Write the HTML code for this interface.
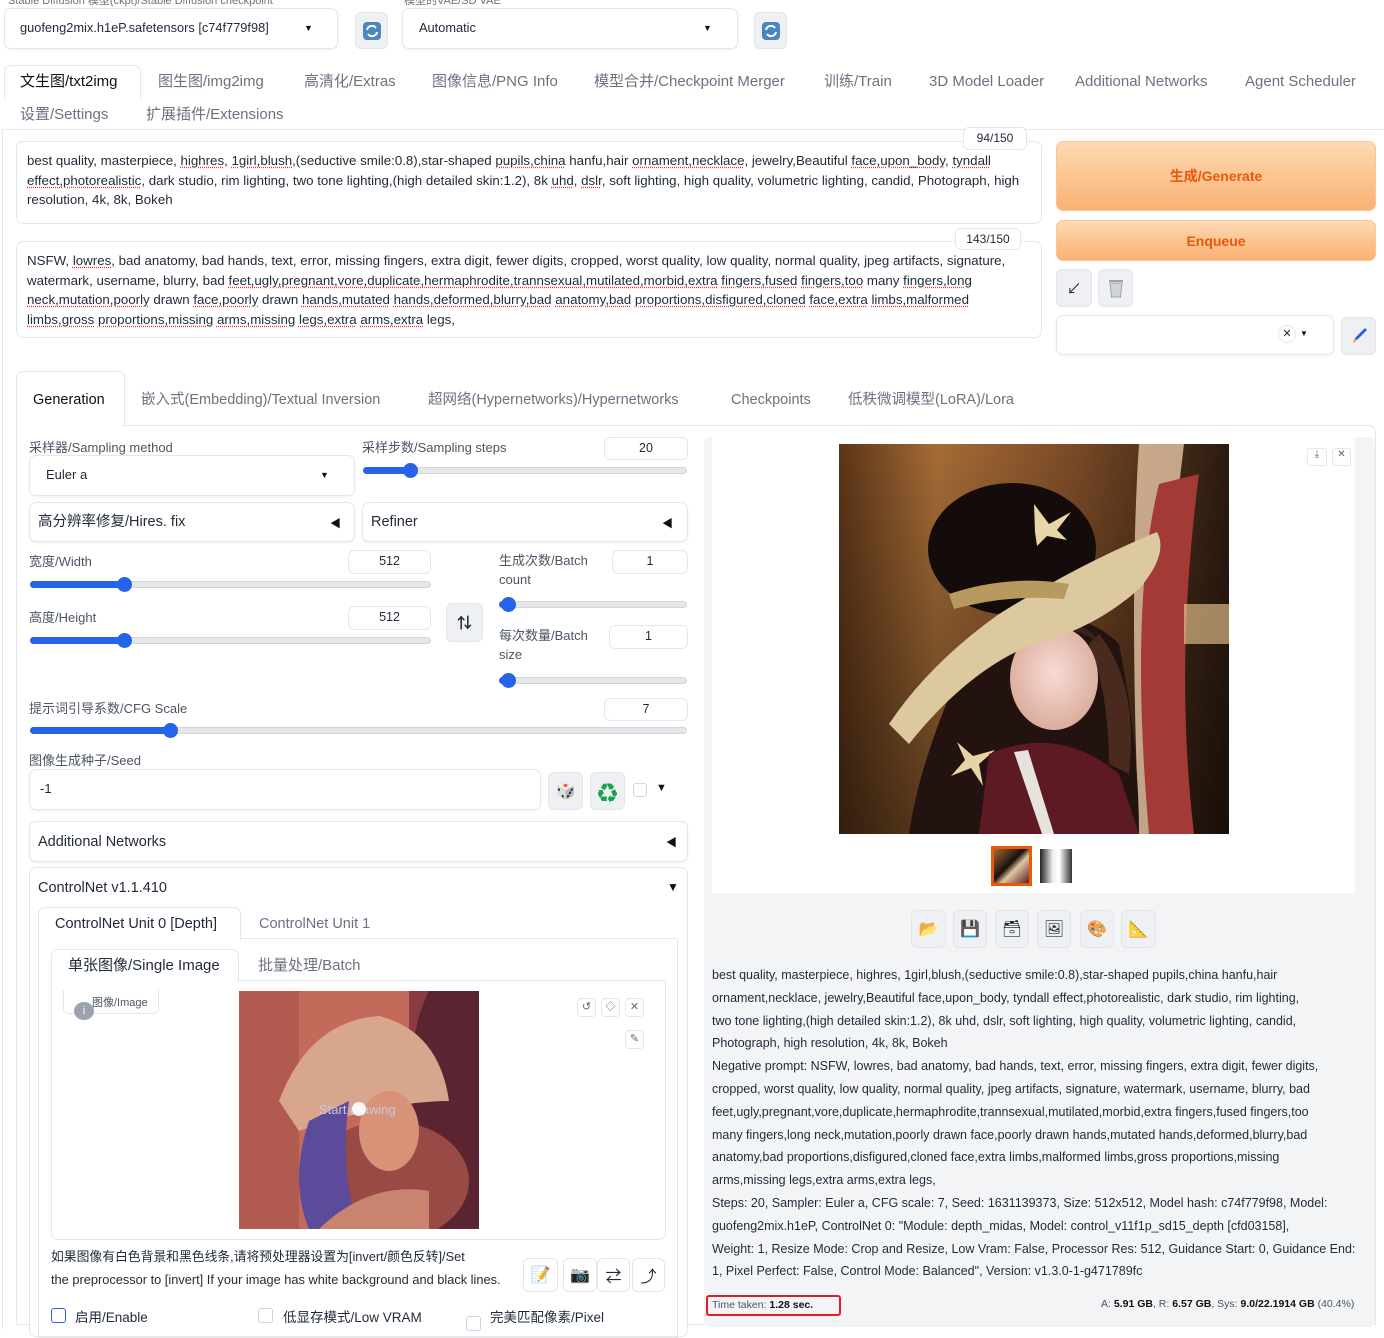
<!DOCTYPE html>
<html><head><meta charset="utf-8"><style>
*{box-sizing:border-box;margin:0;padding:0}
body{width:1384px;height:1322px;overflow:hidden;background:#fff;font-family:"Liberation Sans","Noto Sans CJK SC",sans-serif;color:#1f2937;position:relative;font-size:13px}
.a{position:absolute}
.box{position:absolute;border:1px solid #e5e7eb;border-radius:7px;background:#fff}
.sh{box-shadow:0 1px 2px rgba(0,0,0,.06)}
.btn{position:absolute;background:#eef0f3;border:1px solid #e3e5e8;border-radius:6px;display:flex;align-items:center;justify-content:center;font-size:16px}
.tab{position:absolute;color:#6b7280;font-size:15px;white-space:nowrap;line-height:20px;height:20px}
.lbl{position:absolute;color:#4b5563;font-size:13px;white-space:nowrap}
.num{position:absolute;border:1px solid #e5e7eb;border-radius:6px;background:#fff;text-align:center;font-size:12.5px;line-height:21px}
.sl{position:absolute;height:7px;border-radius:4px;background:#e5e7eb;border:1px solid #d1d5db}
.sl i{position:absolute;left:-1px;top:-1px;height:7px;background:#2563eb;border-radius:4px}
.sl b{position:absolute;top:-5px;width:15px;height:15px;border-radius:50%;background:#2563eb}
.ln{white-space:nowrap;height:19.5px}
.u{text-decoration:underline dotted #e33;text-underline-offset:2px}
.tri{position:absolute;font-size:11px;color:#111}
</style></head><body>
<div class="a" style="left:8px;top:-8px;font-size:11px;color:#6b7280">Stable Diffusion 模型(ckpt)/Stable Diffusion checkpoint</div>
<div class="a" style="left:404px;top:-8px;font-size:11px;color:#6b7280">模型的VAE/SD VAE</div>
<div class="box sh" style="left:4px;top:8px;width:334px;height:41px"></div>
<div class="a ln" style="left:20px;top:20px;font-size:12.8px">guofeng2mix.h1eP.safetensors [c74f779f98]</div>
<div class="tri" style="left:304px;top:23px;font-size:9px">▼</div>
<div class="btn" style="left:355px;top:12px;width:33px;height:37px"><svg width="20" height="20" viewBox="0 0 20 20"><rect x="1" y="1" width="18" height="18" rx="4" fill="#4b86c0"/><path d="M5 9a5 5 0 0 1 9-2M15 11a5 5 0 0 1-9 2" stroke="#fff" stroke-width="2" fill="none"/></svg></div>
<div class="box sh" style="left:402px;top:8px;width:336px;height:41px"></div>
<div class="a" style="left:419px;top:20px;font-size:12.8px">Automatic</div>
<div class="tri" style="left:703px;top:23px;font-size:9px">▼</div>
<div class="btn" style="left:754px;top:12px;width:33px;height:37px"><svg width="20" height="20" viewBox="0 0 20 20"><rect x="1" y="1" width="18" height="18" rx="4" fill="#4b86c0"/><path d="M5 9a5 5 0 0 1 9-2M15 11a5 5 0 0 1-9 2" stroke="#fff" stroke-width="2" fill="none"/></svg></div>

<div class="a" style="left:4px;top:65px;width:137px;height:35px;border:1px solid #e5e7eb;border-bottom:none;border-radius:7px 7px 0 0;background:#fff"></div>
<div class="tab" style="left:20px;top:72px;color:#111">文生图/txt2img</div>
<div class="tab" style="left:158px;top:72px">图生图/img2img</div>
<div class="tab" style="left:304px;top:72px">高清化/Extras</div>
<div class="tab" style="left:432px;top:72px">图像信息/PNG Info</div>
<div class="tab" style="left:594px;top:72px">模型合并/Checkpoint Merger</div>
<div class="tab" style="left:824px;top:72px">训练/Train</div>
<div class="tab" style="left:929px;top:72px">3D Model Loader</div>
<div class="tab" style="left:1075px;top:72px">Additional Networks</div>
<div class="tab" style="left:1245px;top:72px">Agent Scheduler</div>
<div class="tab" style="left:20px;top:105px">设置/Settings</div>
<div class="tab" style="left:146px;top:105px">扩展插件/Extensions</div>
<div class="a" style="left:2px;top:129px;width:1382px;height:1200px;border-left:1px solid #e5e7eb;border-top:1px solid #e5e7eb"></div>

<div class="box" style="left:16px;top:141px;width:1026px;height:83px"></div>
<div class="a" style="left:27px;top:151px;font-size:13.3px;line-height:19.5px">
<div class="ln">best quality, masterpiece, <span class="u">highres</span>, <span class="u">1girl,blush</span>,(seductive smile:0.8),star-shaped <span class="u">pupils,china</span> hanfu,hair <span class="u">ornament,necklace</span>, jewelry,Beautiful <span class="u">face,upon_body</span>, <span class="u">tyndall</span></div>
<div class="ln"><span class="u">effect,photorealistic</span>, dark studio, rim lighting, two tone lighting,(high detailed skin:1.2), 8k <span class="u">uhd</span>, <span class="u">dslr</span>, soft lighting, high quality, volumetric lighting, candid, Photograph, high</div>
<div class="ln">resolution, 4k, 8k, Bokeh</div></div>
<div class="num" style="left:963px;top:127px;width:64px;height:23px;font-size:12px">94/150</div>
<div class="box" style="left:16px;top:241px;width:1026px;height:97px"></div>
<div class="a" style="left:27px;top:251px;font-size:13.3px;line-height:19.7px">
<div class="ln">NSFW, <span class="u">lowres</span>, bad anatomy, bad hands, text, error, missing fingers, extra digit, fewer digits, cropped, worst quality, low quality, normal quality, jpeg artifacts, signature,</div>
<div class="ln">watermark, username, blurry, bad <span class="u">feet,ugly,pregnant,vore,duplicate,hermaphrodite,trannsexual,mutilated,morbid,extra</span> <span class="u">fingers,fused</span> <span class="u">fingers,too</span> many <span class="u">fingers,long</span></div>
<div class="ln"><span class="u">neck,mutation,poorly</span> drawn <span class="u">face,poorly</span> drawn <span class="u">hands,mutated</span> <span class="u">hands,deformed,blurry,bad</span> <span class="u">anatomy,bad</span> <span class="u">proportions,disfigured,cloned</span> <span class="u">face,extra</span> <span class="u">limbs,malformed</span></div>
<div class="ln"><span class="u">limbs,gross</span> <span class="u">proportions,missing</span> <span class="u">arms,missing</span> <span class="u">legs,extra</span> <span class="u">arms,extra</span> legs,</div></div>
<div class="num" style="left:955px;top:228px;width:66px;height:22px;font-size:12px">143/150</div>

<div class="a" style="left:1056px;top:141px;width:320px;height:70px;border-radius:7px;background:linear-gradient(#fed9b4,#f9b272);border:1px solid #f9c79a;display:flex;align-items:center;justify-content:center;color:#ea580c;font-weight:bold;font-size:14px">生成/Generate</div>
<div class="a" style="left:1056px;top:220px;width:320px;height:41px;border-radius:7px;background:linear-gradient(#fed9b4,#f9b272);border:1px solid #f9c79a;display:flex;align-items:center;justify-content:center;color:#ea580c;font-weight:bold;font-size:14px">Enqueue</div>
<div class="btn" style="left:1056px;top:269px;width:36px;height:38px;font-size:15px">↙</div>
<div class="btn" style="left:1098px;top:269px;width:35px;height:38px"><svg width="18" height="20" viewBox="0 0 18 20"><rect x="2" y="2" width="14" height="2" fill="#9ca3af"/><path d="M3 5h12l-1.5 14h-9z" fill="#d1d5db" stroke="#9ca3af"/></svg></div>
<div class="box sh" style="left:1056px;top:315px;width:278px;height:40px"></div>
<div class="a" style="left:1278px;top:325px;width:18px;height:18px;border:1px solid #e5e7eb;border-radius:50%;font-size:11px;text-align:center;line-height:16px">✕</div>
<div class="tri" style="left:1300px;top:329px;font-size:8px">▼</div>
<div class="btn" style="left:1341px;top:317px;width:35px;height:38px"><svg width="20" height="20" viewBox="0 0 20 20"><path d="M4 17l2-5L16 2l2 2L8 14z" fill="#2563eb"/><path d="M4 17l2-5 2 2z" fill="#f59e0b"/></svg></div>

<div class="a" style="left:16px;top:371px;width:109px;height:56px;border:1px solid #e5e7eb;border-bottom:none;border-radius:7px 7px 0 0;background:#fff;z-index:2"></div>
<div class="tab" style="left:33px;top:390px;color:#111;font-size:14.5px;z-index:3">Generation</div>
<div class="tab" style="left:141px;top:390px;font-size:14.5px">嵌入式(Embedding)/Textual Inversion</div>
<div class="tab" style="left:428px;top:390px;font-size:14.5px">超网络(Hypernetworks)/Hypernetworks</div>
<div class="tab" style="left:731px;top:390px;font-size:14.5px">Checkpoints</div>
<div class="tab" style="left:848px;top:390px;font-size:14.5px">低秩微调模型(LoRA)/Lora</div>
<div class="a" style="left:16px;top:425px;width:1360px;height:900px;border:1px solid #e5e7eb;border-radius:0 7px 0 0"></div>

<div class="lbl" style="left:29px;top:437px">采样器/Sampling method</div>
<div class="box sh" style="left:29px;top:455px;width:326px;height:41px"></div>
<div class="a" style="left:46px;top:467px;font-size:13px">Euler a</div>
<div class="tri" style="left:320px;top:470px;font-size:9px">▼</div>
<div class="lbl" style="left:362px;top:437px">采样步数/Sampling steps</div>
<div class="num" style="left:604px;top:437px;width:84px;height:23px">20</div>
<div class="sl" style="left:363px;top:467px;width:324px"><i style="width:48px"></i><b style="left:39px"></b></div>
<div class="box sh" style="left:29px;top:502px;width:326px;height:40px"></div>
<div class="a" style="left:38px;top:512px;font-size:14.5px;line-height:20px">高分辨率修复/Hires. fix</div>
<div class="tri" style="left:330px;top:515px">◀</div>
<div class="box sh" style="left:362px;top:502px;width:326px;height:40px"></div>
<div class="a" style="left:371px;top:512px;font-size:14.5px;line-height:20px">Refiner</div>
<div class="tri" style="left:662px;top:515px">◀</div>

<div class="lbl" style="left:29px;top:551px">宽度/Width</div>
<div class="num" style="left:348px;top:550px;width:83px;height:24px">512</div>
<div class="sl" style="left:30px;top:581px;width:401px"><i style="width:95px"></i><b style="left:86px"></b></div>
<div class="lbl" style="left:29px;top:607px">高度/Height</div>
<div class="num" style="left:348px;top:606px;width:83px;height:24px">512</div>
<div class="sl" style="left:30px;top:637px;width:401px"><i style="width:95px"></i><b style="left:86px"></b></div>
<div class="btn" style="left:446px;top:603px;width:37px;height:39px;font-size:15px;font-weight:bold">⇅</div>
<div class="lbl" style="left:499px;top:551px;line-height:19px">生成次数/Batch<br>count</div>
<div class="num" style="left:612px;top:550px;width:76px;height:24px">1</div>
<div class="sl" style="left:499px;top:601px;width:188px"><i style="width:10px"></i><b style="left:1px"></b></div>
<div class="lbl" style="left:499px;top:626px;line-height:19px">每次数量/Batch<br>size</div>
<div class="num" style="left:609px;top:625px;width:79px;height:24px">1</div>
<div class="sl" style="left:499px;top:677px;width:188px"><i style="width:10px"></i><b style="left:1px"></b></div>
<div class="lbl" style="left:29px;top:698px">提示词引导系数/CFG Scale</div>
<div class="num" style="left:604px;top:698px;width:84px;height:23px">7</div>
<div class="sl" style="left:30px;top:727px;width:657px"><i style="width:142px"></i><b style="left:132px"></b></div>
<div class="lbl" style="left:29px;top:750px">图像生成种子/Seed</div>
<div class="box sh" style="left:29px;top:769px;width:512px;height:41px"></div>
<div class="a" style="left:40px;top:781px">-1</div>
<div class="btn" style="left:548px;top:772px;width:35px;height:38px">🎲</div>
<div class="btn" style="left:590px;top:772px;width:35px;height:38px;color:#16a34a;font-size:20px">♻</div>
<div class="a" style="left:633px;top:783px;width:14px;height:14px;border:1px solid #d1d5db;border-radius:3px"></div>
<div class="tri" style="left:656px;top:782px">▼</div>
<div class="box sh" style="left:29px;top:821px;width:659px;height:41px"></div>
<div class="a" style="left:38px;top:832px;font-size:14.5px;line-height:20px">Additional Networks</div>
<div class="tri" style="left:666px;top:834px">◀</div>

<div class="box" style="left:29px;top:867px;width:659px;height:470px"></div>
<div class="a" style="left:38px;top:878px;font-size:14.5px;line-height:20px">ControlNet v1.1.410</div>
<div class="tri" style="left:667px;top:880px;font-size:12px">▼</div>
<div class="a" style="left:38px;top:938px;width:640px;height:400px;border:1px solid #e5e7eb"></div>
<div class="a" style="left:38px;top:907px;width:203px;height:33px;border:1px solid #e5e7eb;border-bottom:none;border-radius:7px 7px 0 0;background:#fff"></div>
<div class="a" style="left:55px;top:914px;font-size:14.5px;line-height:20px">ControlNet Unit 0 [Depth]</div>
<div class="tab" style="left:259px;top:914px;font-size:14.5px">ControlNet Unit 1</div>
<div class="a" style="left:51px;top:980px;width:615px;height:260px;border:1px solid #e5e7eb;border-radius:0 0 7px 7px"></div>
<div class="a" style="left:51px;top:949px;width:188px;height:33px;border:1px solid #e5e7eb;border-bottom:none;border-radius:7px 7px 0 0;background:#fff"></div>
<div class="a" style="left:68px;top:956px;font-size:15px;line-height:20px">单张图像/Single Image</div>
<div class="tab" style="left:258px;top:956px">批量处理/Batch</div>
<div class="a" style="left:63px;top:990px;width:96px;height:24px;border:1px solid #e5e7eb;border-top:none;border-radius:0 0 5px 5px;font-size:11px;color:#4b5563;padding:4px 0 0 28px">图像/Image</div>
<div class="a" style="left:74px;top:1002px;width:20px;height:18px;border-radius:50%;background:#9ca3af;color:#fff;font-size:11px;text-align:center;line-height:18px">i</div>
<svg class="a" style="left:239px;top:991px" width="240" height="238" viewBox="0 0 240 238">
<rect width="240" height="238" fill="#c46a5a"/>
<rect x="0" y="0" width="60" height="238" fill="#b05a50"/>
<rect x="170" y="0" width="70" height="238" fill="#8a3a40"/>
<path d="M190 0 Q150 80 200 238 L240 238 L240 0z" fill="#5a2530"/>
<ellipse cx="150" cy="190" rx="80" ry="60" fill="#9a4a44"/>
<path d="M40 110 Q70 30 140 25 Q200 40 210 110 Q150 110 60 140z" fill="#d8a68c"/>
<path d="M70 130 Q50 190 70 238 L120 238 Q100 180 110 110z" fill="#5e4a9a"/>
<ellipse cx="150" cy="140" rx="30" ry="40" fill="#d79278"/>
<path d="M80 238 Q130 190 190 200 L190 238z" fill="#c98470"/>
<text x="80" y="123" fill="#c9c9d9" font-size="13" font-family="Liberation Sans">Start drawing</text>
<circle cx="120" cy="118" r="7" fill="#fff" opacity=".9"/>
</svg>
<div class="a" style="left:577px;top:998px;width:19px;height:19px;border:1px solid #e5e7eb;border-radius:4px;font-size:11px;text-align:center;line-height:17px;color:#666">↺</div>
<div class="a" style="left:601px;top:998px;width:19px;height:19px;border:1px solid #e5e7eb;border-radius:4px;font-size:10px;text-align:center;line-height:17px;color:#666">◇</div>
<div class="a" style="left:625px;top:998px;width:19px;height:19px;border:1px solid #e5e7eb;border-radius:4px;font-size:11px;text-align:center;line-height:17px;color:#666">✕</div>
<div class="a" style="left:625px;top:1030px;width:19px;height:19px;border:1px solid #e5e7eb;border-radius:4px;font-size:11px;text-align:center;line-height:17px;color:#666">✎</div>
<div class="a" style="left:51px;top:1245px;font-size:12.8px;line-height:23px">
<div class="ln" style="height:23px">如果图像有白色背景和黑色线条,请将预处理器设置为[invert/颜色反转]/Set</div>
<div class="ln" style="height:23px">the preprocessor to [invert] If your image has white background and black lines.</div></div>
<div class="btn" style="left:523px;top:1258px;width:35px;height:34px;background:#fff">📝</div>
<div class="btn" style="left:563px;top:1258px;width:34px;height:34px;background:#fff">📷</div>
<div class="btn" style="left:597px;top:1258px;width:33px;height:34px;background:#fff">⇄</div>
<div class="btn" style="left:632px;top:1258px;width:33px;height:34px;background:#fff">⤴</div>
<div class="a" style="left:51px;top:1308px;width:15px;height:15px;border:1.5px solid #2563eb;border-radius:3px"></div>
<div class="a" style="left:75px;top:1306px;font-size:13.5px">启用/Enable</div>
<div class="a" style="left:258px;top:1308px;width:15px;height:15px;border:1px solid #d1d5db;border-radius:3px"></div>
<div class="a" style="left:283px;top:1306px;font-size:13.5px">低显存模式/Low VRAM</div>
<div class="a" style="left:466px;top:1316px;width:15px;height:15px;border:1px solid #d1d5db;border-radius:3px"></div>
<div class="a" style="left:490px;top:1306px;font-size:13.5px">完美匹配像素/Pixel</div>

<div class="a" style="left:704px;top:437px;width:671px;height:890px;background:#f3f4f6;border-radius:6px"></div>
<div class="a" style="left:712px;top:437px;width:643px;height:456px;background:#fff"></div>
<div class="a" style="left:1307px;top:448px;width:20px;height:18px;border:1px solid #e5e7eb;border-radius:3px;font-size:10px;text-align:center;color:#666">⤓</div>
<div class="a" style="left:1332px;top:448px;width:19px;height:18px;border:1px solid #e5e7eb;border-radius:3px;font-size:10px;text-align:center;color:#666">✕</div>
<svg class="a" style="left:839px;top:444px" width="390" height="390" viewBox="0 0 390 390">
<defs>
<linearGradient id="g2" x1="0" x2="1"><stop offset="0" stop-color="#5a3418"/><stop offset="0.25" stop-color="#a56c36"/><stop offset="0.6" stop-color="#7a4a26"/><stop offset="1" stop-color="#2a1a10"/></linearGradient>
<linearGradient id="gv" x1="0" y1="0" x2="0" y2="1"><stop offset="0" stop-color="#000" stop-opacity="0"/><stop offset="1" stop-color="#000" stop-opacity=".45"/></linearGradient>
<radialGradient id="fc" cx=".5" cy=".45" r=".6"><stop offset="0" stop-color="#f6dcd4"/><stop offset="1" stop-color="#d9a898"/></radialGradient>
</defs>
<rect width="390" height="390" fill="url(#g2)"/>
<rect width="390" height="390" fill="url(#gv)"/>
<path d="M300 0 Q290 150 300 390 L330 390 Q320 200 345 0z" fill="#e6c6a6" opacity=".8"/>
<path d="M320 40 Q290 160 310 390 L355 390 Q335 220 360 30z" fill="#a43a36"/>
<rect x="345" y="160" width="45" height="40" fill="#f7d29a" opacity=".6"/>
<ellipse cx="173" cy="105" rx="84" ry="66" fill="#140c0a"/>
<path d="M120 230 Q80 320 70 390 L300 390 Q300 300 280 200 Q250 170 200 170z" fill="#231310"/>
<path d="M260 190 Q300 240 290 330 L270 320 Q270 250 250 200z" fill="#4a2a1e"/>
<ellipse cx="215" cy="234" rx="44" ry="52" fill="url(#fc)"/>
<path d="M175 200 Q220 170 262 200 Q250 180 215 175 Q185 178 175 200z" fill="#3a2218"/>
<path d="M50 280 Q90 220 160 170 Q240 120 318 88 Q330 110 300 145 Q255 185 195 200 Q130 225 70 300z" fill="#dcc9a0"/>
<path d="M110 150 Q170 130 230 140 L225 155 Q170 150 115 165z" fill="#b89a60"/>
<path d="M195 60 l15 20 l22 -12 l-14 18 l10 10 l-20 -4 l-10 10 l-2 -14z" fill="#e8d6a8"/>
<path d="M118 298 l16 14 l22 -6 l-16 14 l4 22 l-12 -18 l-20 8 l14 -16z" fill="#e6d4a2"/>
<path d="M150 310 Q220 280 280 330 L300 390 L140 390z" fill="#5e1a22"/>
<path d="M175 308 l28 82 l12 0 l-26 -84z" fill="#e8e2dc"/>
</svg>
<div class="a" style="left:991px;top:846px;width:41px;height:40px;border:3px solid #ea580c;background:linear-gradient(135deg,#a56c36,#1a100c 45%,#dcc9a0 60%,#5e1a22)"></div>
<div class="a" style="left:1040px;top:849px;width:32px;height:34px;background:linear-gradient(90deg,#222,#eee 40%,#fff 60%,#333)"></div>
<div class="btn" style="left:911px;top:910px;width:35px;height:38px">📂</div>
<div class="btn" style="left:953px;top:910px;width:34px;height:38px">💾</div>
<div class="btn" style="left:995px;top:910px;width:34px;height:38px">🗃</div>
<div class="btn" style="left:1037px;top:910px;width:34px;height:38px">🖼</div>
<div class="btn" style="left:1080px;top:910px;width:34px;height:38px">🎨</div>
<div class="btn" style="left:1121px;top:910px;width:35px;height:38px">📐</div>
<div class="a" style="left:712px;top:964px;font-size:12.5px;line-height:22.8px">
<div class="ln" style="height:22.8px">best quality, masterpiece, highres, 1girl,blush,(seductive smile:0.8),star-shaped pupils,china hanfu,hair</div>
<div class="ln" style="height:22.8px">ornament,necklace, jewelry,Beautiful face,upon_body, tyndall effect,photorealistic, dark studio, rim lighting,</div>
<div class="ln" style="height:22.8px">two tone lighting,(high detailed skin:1.2), 8k uhd, dslr, soft lighting, high quality, volumetric lighting, candid,</div>
<div class="ln" style="height:22.8px">Photograph, high resolution, 4k, 8k, Bokeh</div>
<div class="ln" style="height:22.8px">Negative prompt: NSFW, lowres, bad anatomy, bad hands, text, error, missing fingers, extra digit, fewer digits,</div>
<div class="ln" style="height:22.8px">cropped, worst quality, low quality, normal quality, jpeg artifacts, signature, watermark, username, blurry, bad</div>
<div class="ln" style="height:22.8px">feet,ugly,pregnant,vore,duplicate,hermaphrodite,trannsexual,mutilated,morbid,extra fingers,fused fingers,too</div>
<div class="ln" style="height:22.8px">many fingers,long neck,mutation,poorly drawn face,poorly drawn hands,mutated hands,deformed,blurry,bad</div>
<div class="ln" style="height:22.8px">anatomy,bad proportions,disfigured,cloned face,extra limbs,malformed limbs,gross proportions,missing</div>
<div class="ln" style="height:22.8px">arms,missing legs,extra arms,extra legs,</div>
<div class="ln" style="height:22.8px">Steps: 20, Sampler: Euler a, CFG scale: 7, Seed: 1631139373, Size: 512x512, Model hash: c74f779f98, Model:</div>
<div class="ln" style="height:22.8px">guofeng2mix.h1eP, ControlNet 0: "Module: depth_midas, Model: control_v11f1p_sd15_depth [cfd03158],</div>
<div class="ln" style="height:22.8px">Weight: 1, Resize Mode: Crop and Resize, Low Vram: False, Processor Res: 512, Guidance Start: 0, Guidance End:</div>
<div class="ln" style="height:22.8px">1, Pixel Perfect: False, Control Mode: Balanced", Version: v1.3.0-1-g471789fc</div></div>
<div class="a" style="left:706px;top:1295px;width:135px;height:21px;border:2px solid #e11d2a;border-radius:3px;font-size:10.5px;color:#4b5563;padding:2px 0 0 4px;white-space:nowrap">Time taken: <b style="color:#111">1.28 sec.</b></div>
<div class="a ln" style="left:1101px;top:1298px;font-size:10.5px;color:#4b5563">A: <b style="color:#111">5.91 GB</b>, R: <b style="color:#111">6.57 GB</b>, Sys: <b style="color:#111">9.0/22.1914 GB</b> (40.4%)</div>
</body></html>
